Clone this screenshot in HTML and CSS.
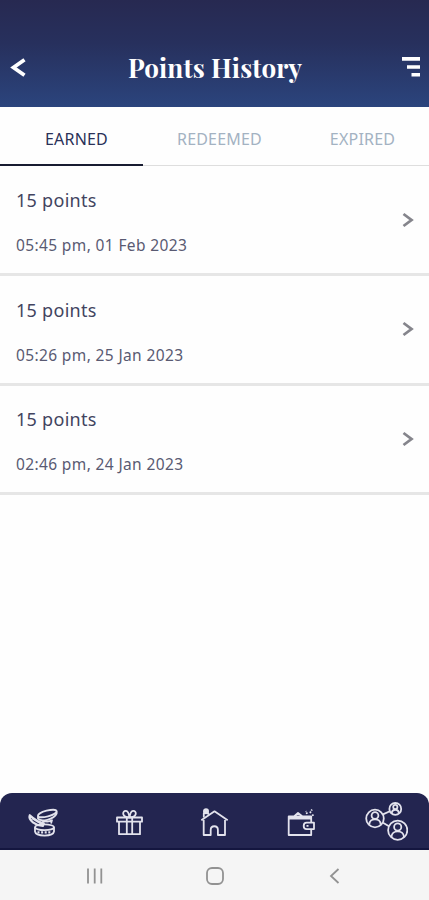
FILE: index.html
```
<!DOCTYPE html>
<html lang="en">
<head>
<meta charset="utf-8">
<title>Points History</title>
<meta name="viewport" content="width=device-width, initial-scale=1">
<link rel="stylesheet" href="styles.css">
</head>
<body>
<header class="topbar">
<a href="#" class="back" aria-label="Back"><svg width="18" height="20" viewBox="0 0 18 20"><path d="M16.5 1.8 5.5 9.5l11 7.7" fill="none" stroke="#fff" stroke-width="3.8"/></svg></a>
<h1>Points History</h1>
<a href="#" class="menu" aria-label="Menu"><svg width="20" height="22" viewBox="0 0 20 22" fill="#fff"><path d="M0 0h18v3.8H0zM5 8.2h13v3.6H5zM9.5 16H18v3.6H9.5z"/></svg></a>
</header>
<nav class="tabs">
<a href="#" class="active">EARNED</a>
<a href="#">REDEEMED</a>
<a href="#">EXPIRED</a>
</nav>
<main>
<ul class="history">
<li>
<div><p class="points">15 points</p><p class="date">05:45 pm, 01 Feb 2023</p></div>
<svg width="12" height="16" viewBox="0 0 12 16"><path d="M1.5 2 9.5 8 1.5 14"/></svg>
</li>
<li>
<div><p class="points">15 points</p><p class="date">05:26 pm, 25 Jan 2023</p></div>
<svg width="12" height="16" viewBox="0 0 12 16"><path d="M1.5 2 9.5 8 1.5 14"/></svg>
</li>
<li>
<div><p class="points">15 points</p><p class="date">02:46 pm, 24 Jan 2023</p></div>
<svg width="12" height="16" viewBox="0 0 12 16"><path d="M1.5 2 9.5 8 1.5 14"/></svg>
</li>
</ul>
</main>
<footer>
<nav class="appnav">
<a href="#" aria-label="Jewellery">
<svg width="32" height="30" viewBox="0 0 32 30">
<ellipse cx="20.3" cy="5.5" rx="9.6" ry="2.9" transform="rotate(-15 20.3 5.5)"/>
<path d="M11 8.3v2.4c3 3.6 16 1 18.6-5V3.5"/>
<path d="M2.8 7.2c-2 5 6 10.3 13 10.8l1-2.6C11 14 7 11 2.8 7.2zM5 10l10 6" stroke-width="2.2"/>
<path d="M15 12.8c4 1 8 .8 10-.5l-1 3.2"/>
<ellipse cx="17.5" cy="19.3" rx="9.5" ry="2.9"/>
<path d="M8 19.3v4.2c1 5.4 18 5.4 19 0v-4.2"/>
<path d="M10.5 24.3h14" stroke-width="2.2" stroke-dasharray="2 1.6"/>
</svg></a>
<a href="#" aria-label="Gifts">
<svg width="28" height="28" viewBox="0 0 28 28">
<path d="M2 8.5h25v4.2H2zM4 12.7h21v12.5H4zM11.8 8.5v16.7M17.2 8.5v16.7"/>
<path d="M14.5 8.5C6.5 8.5 7 1.5 11 1.8 13.5 2 14 5 14.5 8.5 15 5 15.5 2 18 1.8 22 1.5 22.5 8.5 14.5 8.5"/>
</svg></a>
<a href="#" aria-label="Home">
<svg width="30" height="30" viewBox="0 0 30 30">
<path d="m2.3 12.3 13.2-9 13.2 9M4.7 12v15h7v-5c0-5 7.2-5 7.2 0v5H26V12"/>
<path d="M4.8 9.5V5.2h4.5v1.5"/><circle cx="7" cy="3.2" r="2.1" fill="#e3e3ed"/>
</svg></a>
<a href="#" aria-label="Wallet">
<svg width="30" height="30" viewBox="0 0 30 30">
<path d="M26.2 14V8.5H3.7V27h22.5v-6M9 8.5l4-3.6 4.5 3.6M3.7 8.5v2h22.5"/>
<path d="M29 14.7h-7.3c-4 0-4 6.4 0 6.4H29zM21.5 17.9h2"/>
<path d="m22 6-1-3M25 5l2-3.5M27 7.5l2.5-1" stroke-dasharray="1.7 1"/>
</svg></a>
<a href="#" aria-label="Refer friends">
<svg width="44" height="42" viewBox="0 0 44 42">
<circle cx="11" cy="16.5" r="8.8"/><circle cx="31.3" cy="6.9" r="5.9"/><circle cx="33.7" cy="28.2" r="9.6"/>
<path d="m19 12.4 6.8-3.2M19 20.7l6 3.5"/>
<circle cx="11" cy="13.5" r="3.4"/><path d="M5.3 22.5c0-7 11.4-7 11.4 0"/>
<circle cx="31.3" cy="5" r="2.1"/><path d="M27.8 11.5c0-5 7-5 7 0"/>
<circle cx="33.7" cy="25" r="3.6"/><path d="M27.5 34.9c0-7.5 12.4-7.5 12.4 0"/>
</svg></a>
</nav>
<nav class="sysnav">
<svg width="18" height="18" viewBox="0 0 18 18"><path d="M2 1.5v15M8.7 1.5v15M15.3 1.5v15"/></svg>
<svg width="20" height="20" viewBox="0 0 20 20"><rect x="2" y="2" width="16" height="16" rx="5"/></svg>
<svg width="18" height="18" viewBox="0 0 18 18"><path d="M13.5 2 6 9l7.5 7"/></svg>
</nav>
</footer>
</body>
</html>
```

FILE: styles.css
```
*{box-sizing:border-box;}
body{margin:0;height:900px;display:flex;flex-direction:column;background-color:#fefefe;color:#42445f;
font-family:"Noto Sans","Open Sans",sans-serif;}
a{color:inherit;text-decoration:none;}
svg{display:block;}
.topbar{height:107px;padding:28px 7px 0 8px;display:grid;grid-template-columns:20px 1fr 20px;align-items:center;
background:linear-gradient(#272951,#27305d 40%,#2b447d);color:#ffffff;}
.topbar h1{margin:0;text-align:center;font:bold 26px/36px "Playfair Display","Liberation Serif",serif;letter-spacing:.1px;}
.tabs{height:59px;display:grid;grid-template-columns:repeat(3,1fr);border-bottom:1px solid #dedede;}
.tabs a{height:59px;padding:20px 0 0 10px;text-align:center;font-size:16px;line-height:24px;letter-spacing:.2px;color:#a3b2c2;}
.tabs a.active{border-bottom:2px solid #181c31;color:#2a3158;}
main{flex:1;}
.history{margin:0;padding:0;list-style-type:none;}
.history li{height:109.8px;padding:0 15px 0 16px;display:flex;align-items:flex-start;justify-content:space-between;
border-bottom:3px solid #e6e6e6;}
.history p{margin:0;}
.history svg{margin-top:45.5px;fill:none;stroke:#85858c;stroke-width:2.8;}
.points{padding-top:21.8px;font-size:18px;line-height:24px;letter-spacing:.28px;}
.history .date{margin-top:22px;font-size:15.5px;line-height:22px;letter-spacing:.37px;color:#595a72;}
.appnav{height:57px;display:grid;grid-template-columns:repeat(5,1fr);align-items:center;justify-items:center;
background-color:#232550;border-bottom:2px solid #14163f;border-radius:12px 12px 0 0;}
.appnav a{padding-top:4px;}
.appnav svg{fill:none;stroke:#e3e3ed;stroke-width:1.8;stroke-linejoin:round;}
.sysnav{height:50px;padding:2px 86px 0 86px;display:flex;align-items:center;justify-content:space-between;
background-color:#f5f5f5;}
.sysnav svg{fill:none;stroke:#929292;stroke-width:1.8;}
```
